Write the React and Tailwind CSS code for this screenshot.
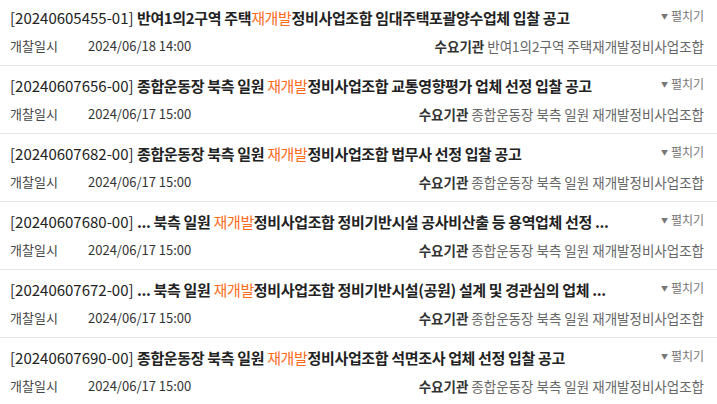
const rows = [
  {
    id: '20240605455-01',
    pre: '반여1의2구역 주택',
    post: '정비사업조합 임대주택포괄양수업체 입찰 공고',
    date: '2024/06/18 14:00',
    org: '반여1의2구역 주택재개발정비사업조합',
  },
  {
    id: '20240607656-00',
    pre: '종합운동장 북측 일원 ',
    post: '정비사업조합 교통영향평가 업체 선정 입찰 공고',
    date: '2024/06/17 15:00',
    org: '종합운동장 북측 일원 재개발정비사업조합',
  },
  {
    id: '20240607682-00',
    pre: '종합운동장 북측 일원 ',
    post: '정비사업조합 법무사 선정 입찰 공고',
    date: '2024/06/17 15:00',
    org: '종합운동장 북측 일원 재개발정비사업조합',
  },
  {
    id: '20240607680-00',
    pre: '... 북측 일원 ',
    post: '정비사업조합 정비기반시설 공사비산출 등 용역업체 선정 ...',
    date: '2024/06/17 15:00',
    org: '종합운동장 북측 일원 재개발정비사업조합',
  },
  {
    id: '20240607672-00',
    pre: '... 북측 일원 ',
    post: '정비사업조합 정비기반시설(공원) 설계 및 경관심의 업체 ...',
    date: '2024/06/17 15:00',
    org: '종합운동장 북측 일원 재개발정비사업조합',
  },
  {
    id: '20240607690-00',
    pre: '종합운동장 북측 일원 ',
    post: '정비사업조합 석면조사 업체 선정 입찰 공고',
    date: '2024/06/17 15:00',
    org: '종합운동장 북측 일원 재개발정비사업조합',
  },
];

const BidRow = ({ row, first }) => (
  <li
    className={
      'px-[10px] pb-[9px] border-b border-[#e8e8e8] ' +
      (first ? 'pt-[8px]' : 'pt-[10px]')
    }
  >
    <div className="flex items-start justify-between">
      <p className="h-5 leading-5 text-[15px] text-[#222] whitespace-nowrap">
        <span>[{row.id}] </span>
        <span className="tracking-[-0.35px]">
          <span className="font-bold">{row.pre}</span>
          <span className="text-[#ff6b1a]">재개발</span>
          <span className="font-bold">{row.post}</span>
        </span>
      </p>
      <button className="flex items-center gap-[3px] mr-[3px] h-4 text-[12px] leading-4 text-[#777]">
        <span className="text-[7px] text-[#777]">▼</span>
        펼치기
      </button>
    </div>
    <div className="mt-[8px] flex items-center justify-between h-5 text-[13px] leading-5">
      <div className="flex">
        <span className="w-[78px] text-[#444]">개찰일시</span>
        <span className="text-[#333]">{row.date}</span>
      </div>
      <div className="mr-[3px] text-[13.5px]">
        <span className="font-bold text-[#333]">수요기관</span>{' '}
        <span className="text-[#666]">{row.org}</span>
      </div>
    </div>
  </li>
);

export default function App() {
  return (
    <div
      className="w-[717px] h-[404px] overflow-hidden bg-white"
      style={{ fontFamily: '"Noto Sans CJK KR", "Noto Sans", sans-serif' }}
    >
      <ul>
        {rows.map((row, i) => (
          <BidRow key={row.id} row={row} first={i === 0} />
        ))}
      </ul>
    </div>
  );
}
